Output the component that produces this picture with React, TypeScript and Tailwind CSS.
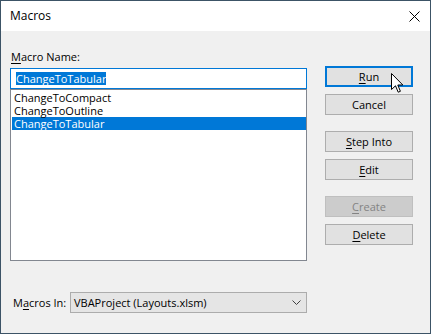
import React from "react";

const font = { fontFamily: '"Open Sans", "Liberation Sans", sans-serif' };

function Btn({ children, primary, disabled }: { children: React.ReactNode; primary?: boolean; disabled?: boolean }) {
  const cls = primary
    ? "border-2 border-[#0078d7] bg-[#e1e1e1] text-black"
    : disabled
    ? "border border-[#bfbfbf] bg-[#cccccc] text-[#838383]"
    : "border border-[#adadad] bg-[#e1e1e1] text-black";
  return (
    <div className={`h-[21px] w-[88px] flex items-center justify-center text-[11px] leading-[15px] whitespace-nowrap ${cls}`}>
      {children}
    </div>
  );
}

export default function App() {
  return (
    <div className="w-[431px] h-[334px] border border-[#3c5366] flex flex-col bg-[#f0f0f0] relative overflow-hidden" style={font}>
      <div className="h-[30px] bg-white flex items-center justify-between pl-[9px] pr-[10px] shrink-0">
        <span className="text-[12px] leading-[16px] text-black">Macros</span>
        <svg width="11" height="11" viewBox="0 0 11 11" className="block">
          <path d="M0.5 0.5 L10.5 10.5 M10.5 0.5 L0.5 10.5" stroke="#000" strokeWidth="1" />
        </svg>
      </div>
      <div className="flex-1 flex pl-[9px]">
        <div className="w-[297px] mt-[18px] flex flex-col">
          <div className="h-[16px] text-[11px] leading-[16px] text-black pl-[1px] whitespace-nowrap">
            <span className="underline underline-offset-2">M</span>acro Name:
          </div>
          <div className="mt-[3px] h-[21px] border border-[#0078d7] bg-white flex items-center pl-[5px]">
            <span className="bg-[#0078d7] text-white text-[11px] leading-[13px] whitespace-nowrap">ChangeToTabular</span>
          </div>
          <div className="h-[172px] border border-[#828790] bg-white pt-[1px] pl-[1px] text-[11px]">
            <div className="h-[13px] leading-[13px] pl-[2px] text-black whitespace-nowrap">ChangeToCompact</div>
            <div className="h-[13px] leading-[13px] pl-[2px] text-black whitespace-nowrap">ChangeToOutline</div>
            <div className="h-[13px] leading-[13px] pl-[2px] bg-[#0078d7] text-white whitespace-nowrap">ChangeToTabular</div>
          </div>
          <div className="mt-[31px] flex items-center">
            <div className="w-[60px] pl-[3px] text-[11px] leading-[16px] text-black whitespace-nowrap">
              M<span className="underline underline-offset-2">a</span>cros In:
            </div>
            <div className="flex-1 h-[21px] border border-[#acacac] bg-[#e5e5e5] flex items-center justify-between pl-[3px] pr-[5px]">
              <span className="text-[11px] leading-[16px] text-black whitespace-nowrap">VBAProject (Layouts.xlsm)</span>
              <svg width="9" height="5" viewBox="0 0 9 5" className="block">
                <path d="M0.5 0.5 L4.5 4.5 L8.5 0.5" stroke="#404040" strokeWidth="1" fill="none" />
              </svg>
            </div>
          </div>
        </div>
        <div className="ml-[18px] mt-[35px] w-[88px] flex flex-col">
          <Btn primary>
            <span><span className="underline underline-offset-2">R</span>un</span>
          </Btn>
          <div className="mt-[7px]">
            <Btn>Cancel</Btn>
          </div>
          <div className="mt-[16px]">
            <Btn>
              <span><span className="underline underline-offset-2">S</span>tep Into</span>
            </Btn>
          </div>
          <div className="mt-[7px]">
            <Btn>
              <span><span className="underline underline-offset-2">E</span>dit</span>
            </Btn>
          </div>
          <div className="mt-[16px]">
            <Btn disabled>
              <span><span className="underline underline-offset-2">C</span>reate</span>
            </Btn>
          </div>
          <div className="mt-[7px]">
            <Btn>
              <span><span className="underline underline-offset-2">D</span>elete</span>
            </Btn>
          </div>
        </div>
      </div>
      <svg width="13" height="21" viewBox="0 0 13 21" className="absolute left-[390px] top-[72px]">
        <path d="M0.5 0.5 L0.5 16.5 L4.5 12.8 L7.2 19.2 L9.4 18.3 L6.8 12 L11.8 12 Z" fill="#fff" stroke="#000" strokeWidth="1" strokeLinejoin="miter" />
      </svg>
    </div>
  );
}
